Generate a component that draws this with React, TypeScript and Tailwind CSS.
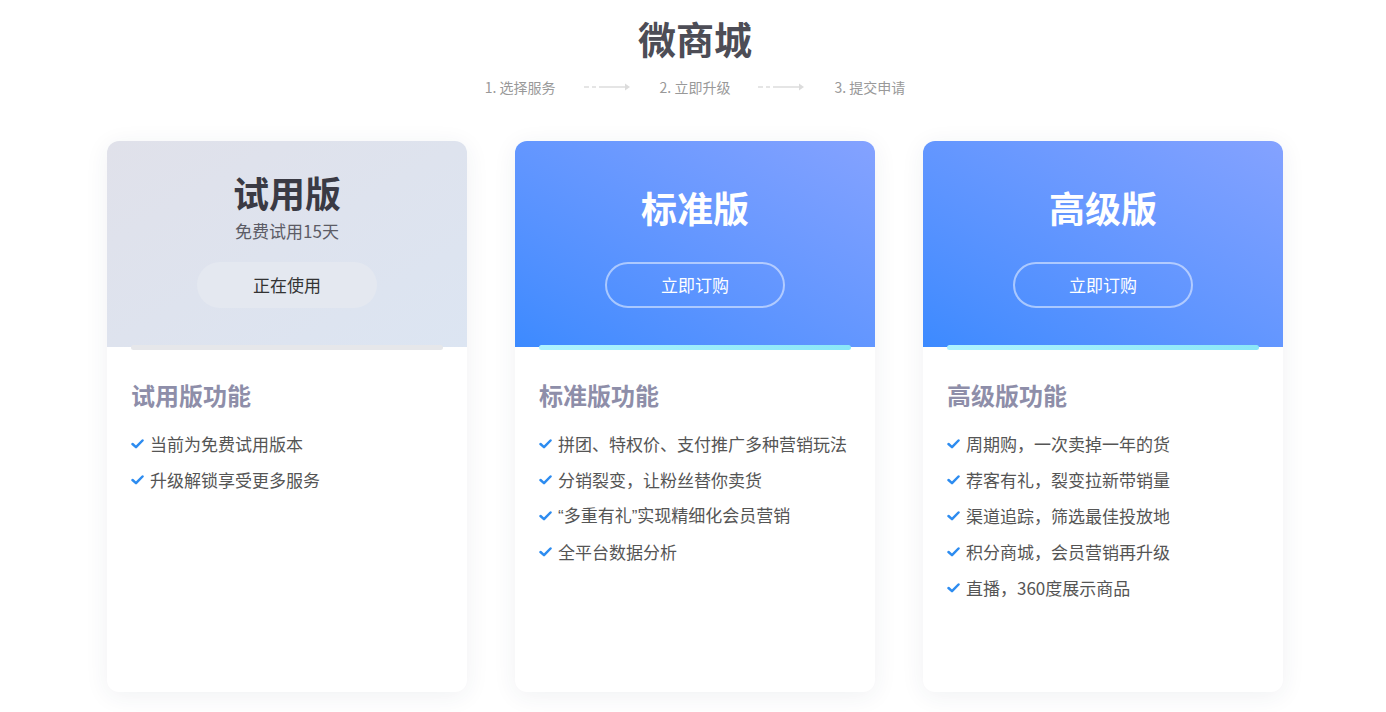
import React from 'react';

const font = { fontFamily: '"Microsoft YaHei", "Noto Sans CJK SC", "Liberation Sans", sans-serif' };

type Plan = {
  name: string;
  sub?: string;
  btn: string;
  active?: boolean;
  features: React.ReactNode[];
};

const Q = ({ children }: { children: string }) => (
  <span className="font-['Liberation_Sans',sans-serif]">{children}</span>
);

const plans: Plan[] = [
  {
    name: '试用版',
    sub: '免费试用15天',
    btn: '正在使用',
    active: true,
    features: ['当前为免费试用版本', '升级解锁享受更多服务'],
  },
  {
    name: '标准版',
    btn: '立即订购',
    features: [
      '拼团、特权价、支付推广多种营销玩法',
      '分销裂变，让粉丝替你卖货',
      <>
        <Q>“</Q>多重有礼<Q>”</Q>实现精细化会员营销
      </>,
      '全平台数据分析',
    ],
  },
  {
    name: '高级版',
    btn: '立即订购',
    features: ['周期购，一次卖掉一年的货', '荐客有礼，裂变拉新带销量', '渠道追踪，筛选最佳投放地', '积分商城，会员营销再升级', '直播，360度展示商品'],
  },
];

function Arrow() {
  return (
    <svg width="48" height="10" viewBox="0 0 48 10" className="mx-7">
      <line x1="0" y1="5" x2="5" y2="5" stroke="#dcdcdc" strokeWidth="1.5" />
      <line x1="8" y1="5" x2="12" y2="5" stroke="#dcdcdc" strokeWidth="1.5" />
      <line x1="15" y1="5" x2="44" y2="5" stroke="#dcdcdc" strokeWidth="1.5" />
      <path d="M41 1.5 L46 5 L41 8.5 Z" fill="#dcdcdc" />
    </svg>
  );
}

function Check() {
  return (
    <svg width="13" height="10" viewBox="0 0 13 10" className="mr-[6px] shrink-0">
      <polyline points="1.5,5 5,8.2 11.5,1.5" fill="none" stroke="#2d8cf0" strokeWidth="2.5" strokeLinecap="round" strokeLinejoin="round" />
    </svg>
  );
}

function Card({ plan }: { plan: Plan }) {
  return (
    <div className="w-[360px] h-[551px] bg-white rounded-xl shadow-[0_4px_24px_rgba(40,50,80,0.07)] flex flex-col">
      {/* header */}
      <div
        className={
          'h-[206px] rounded-t-xl flex flex-col items-center pt-[30px] ' +
          (plan.active
            ? 'bg-linear-to-br from-[#e0e1ea] to-[#dce5f2]'
            : 'bg-linear-to-tr from-[#3c8aff] to-[#84a2ff]')
        }
      >
        <div className="h-[72px] flex flex-col items-center justify-center">
          <div className={'text-[36px] leading-[40px] font-bold ' + (plan.active ? 'text-[#3a3a44]' : 'text-white')}>
            {plan.name}
          </div>
          {plan.sub && <div className="mt-[7px] text-[17px] leading-[24px] text-[#5c5c66]">{plan.sub}</div>}
        </div>
        {plan.active ? (
          <div className="mt-[19px] w-[180px] h-[46px] rounded-full bg-[#e4e8f0] flex items-center justify-center text-[17px] text-[#333]">
            {plan.btn}
          </div>
        ) : (
          <div className="mt-[19px] w-[180px] h-[46px] rounded-full border-2 border-white/50 flex items-center justify-center text-[17px] text-white">
            {plan.btn}
          </div>
        )}
      </div>
      {/* accent bar */}
      <div
        className={
          'mx-6 -mt-[2px] h-[5px] rounded-full ' +
          (plan.active ? 'bg-[#e6e7ea]' : 'bg-linear-to-r from-[#aef3ff] to-[#8ae7f8]')
        }
      />
      {/* body */}
      <div className="px-6 pt-[29px]">
        <div className="text-[24px] leading-[32px] font-bold text-[#8e8ea9]">{plan.name}功能</div>
        <ul className="mt-[15px]">
          {plan.features.map((f, i) => (
            <li key={i} className="flex items-center h-[36px] text-[17px] text-[#555]">
              <Check />
              <span>{f}</span>
            </li>
          ))}
        </ul>
      </div>
    </div>
  );
}

export default function App() {
  return (
    <div className="min-h-screen bg-white flex flex-col items-center pl-1" style={font}>
      <h1 className="mt-[14px] text-[38px] leading-[48px] font-bold text-[#4d4d56]">微商城</h1>
      <div className="mt-[15px] flex items-center text-[14px] leading-[20px] text-[#999]">
        <span>1. 选择服务</span>
        <Arrow />
        <span>2. 立即升级</span>
        <Arrow />
        <span>3. 提交申请</span>
      </div>
      <div className="mt-[44px] flex gap-12">
        {plans.map((p) => (
          <Card key={p.name} plan={p} />
        ))}
      </div>
    </div>
  );
}
